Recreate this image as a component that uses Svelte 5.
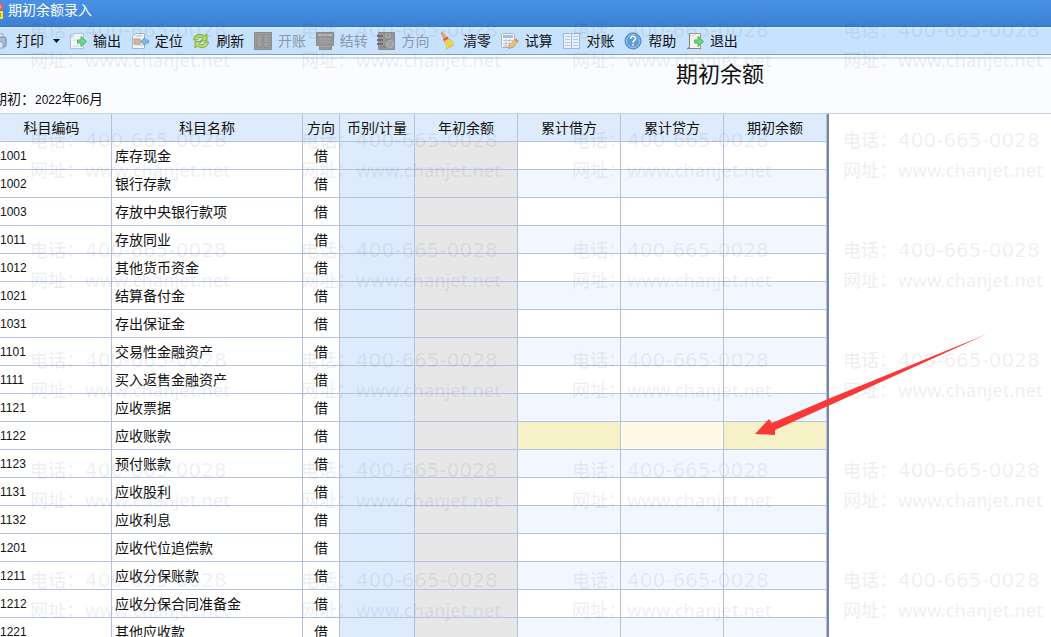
<script lang="ts">
    interface Account {
        code: string;
        name: string;
        direction: string;
    }

    const tools = [
        { icon: "export", label: "输出" },
        { icon: "locate", label: "定位" },
        { icon: "refresh", label: "刷新" },
        { icon: "open", label: "开账", disabled: true },
        { icon: "carry", label: "结转", disabled: true },
        { icon: "direction", label: "方向", disabled: true },
        { icon: "clear", label: "清零" },
        { icon: "trial", label: "试算" },
        { icon: "check", label: "对账" },
        { icon: "help", label: "帮助" },
        { icon: "exit", label: "退出" },
    ];

    const columns = ["科目编码", "科目名称", "方向", "币别/计量", "年初余额", "累计借方", "累计贷方", "期初余额"];

    const names: [string, string][] = [
        ["1001", "库存现金"],
        ["1002", "银行存款"],
        ["1003", "存放中央银行款项"],
        ["1011", "存放同业"],
        ["1012", "其他货币资金"],
        ["1021", "结算备付金"],
        ["1031", "存出保证金"],
        ["1101", "交易性金融资产"],
        ["1111", "买入返售金融资产"],
        ["1121", "应收票据"],
        ["1122", "应收账款"],
        ["1123", "预付账款"],
        ["1131", "应收股利"],
        ["1132", "应收利息"],
        ["1201", "应收代位追偿款"],
        ["1211", "应收分保账款"],
        ["1212", "应收分保合同准备金"],
        ["1221", "其他应收款"],
    ];
    const accounts: Account[] = names.map(([code, name]) => ({ code, name, direction: "借" }));

    let selected = $state("1122");

    // 4 columns x 6 rows of contact stamps
    const stamps = Array.from({ length: 24 }, (_, i) => i);
</script>

<div class="screen">
    <div class="window">
        <header class="titlebar">
            <svg class="logo" width="12" height="18" viewBox="0 0 12 18">
                <rect x="1" y="3" width="9" height="5" fill="#e9a0a8" stroke="#e0606a" stroke-width="2" />
                <rect x="1" y="11" width="9" height="6" fill="#d98a3a" stroke="#f4ea2a" stroke-width="2" />
            </svg>
            <span>期初余额录入</span>
        </header>

        <nav class="toolbar">
            <button class="tool print">
                <svg width="15" height="18" viewBox="0 0 15 18">
                    <path d="M3 6V2h8v4" fill="#eef4fa" stroke="#8ea3ba" />
                    <rect x="1" y="5" width="13" height="10" rx="2" fill="#a9bdd2" stroke="#7189a5" />
                    <rect x="3" y="10" width="8" height="6" fill="#dfe8f1" stroke="#8ea3ba" />
                </svg>
                <span>打印</span>
                <svg class="caret" width="7" height="4" viewBox="0 0 7 4"><path d="M0 0h7L3.500 4z" fill="#111" /></svg>
            </button>
            <div class="tools">
                {#each tools as tool}
                    <button class="tool" disabled={tool.disabled}>
                        <svg width="18" height="18" viewBox="0 0 18 18">
                            {#if tool.icon === "export"}
                                <path d="M4.500 1.500h10v15h-13v-12z" fill="#f1f5f9" stroke="#b3c0cd" />
                                <path d="M4.500 1.500v3.500h-3M4 8h3M4 14h6" fill="none" stroke="#c6d0da" />
                                <path d="M8.500 8H12V4.500l5.500 5-5.500 5V11H8.500z" fill="#6fd98a" stroke="#45b765" />
                            {:else if tool.icon === "locate"}
                                <path d="M4.500 1.500h9v15h-12v-12z" fill="#f4f7fa" stroke="#a5b5c6" />
                                <path d="M6 4h5M4 13h8" stroke="#b9c4d0" />
                                <rect x="3" y="7" width="6" height="5" fill="#d9b78c" stroke="#a9a08f" />
                                <path d="M17.500 8H14V5.500L9.500 9.500l4.500 4V11h3.500z" fill="#8ab3e4" stroke="#6c9bd6" />
                            {:else if tool.icon === "refresh"}
                                <path d="M1.500 8C2 3 8 .5 12.500 4L15 2v7H8.500L11 6.200C8 4.400 6 5.500 5 8z" fill="#b6d765" stroke="#84ab3a" />
                                <path d="M16.500 10c-.5 5-6.500 7.500-11 4L3 16V9.500h6.500L7 11.800c3 1.800 5 .7 6-1.800z" fill="#bddb68" stroke="#84ab3a" />
                            {:else if tool.icon === "open"}
                                <rect x=".5" y=".5" width="17" height="17" fill="#9c9c9c" stroke="#8c8c8c" />
                                <path d="M3 3h5v12H3zM10 3h5v12h-5z" fill="#aeaeae" stroke="#888" />
                                <path d="M4 5.500h3M4 8h3M4 10.500h3M4 13h3M11 5.500h3M11 8h3M11 10.500h3M11 13h3" stroke="#8a8a8a" />
                            {:else if tool.icon === "carry"}
                                <path d="M.5.500h17v13h-2v4h-12v-4h-3z" fill="#969696" stroke="#8c8c8c" />
                                <path d="M2 3h14" stroke="#b5b5b5" stroke-width="2" />
                                <path d="M4 7h10M4 10h10" stroke="#a8a8a8" />
                                <path d="M5 14.500h9" stroke="#aaa" />
                            {:else if tool.icon === "direction"}
                                <path d="M1.500.500h16v17h-16z" fill="#969696" stroke="#8a8a8a" />
                                <path d="M9 1v4h4V1" stroke="#bbb" fill="none" />
                                <path d="M0 4h6M0 8h6M0 12h6" stroke="#6e6e6e" stroke-width="2" />
                                <path d="M8 8h5M3 15h6" stroke="#7c7c7c" />
                                <circle cx="13" cy="12" r="3.500" fill="#a0a0a0" stroke="#b8b8b8" />
                            {:else if tool.icon === "clear"}
                                <path d="M2 1l2-.5 4 5.500-2.500 1.500z" fill="#f0ae72" stroke="#d8925e" />
                                <path d="M4 7l4.500-2.500L10 7l-5 3z" fill="#d9604f" />
                                <path d="M5 9.500L10 7c3 1.500 4 3.500 4.500 6.500l-7 3.500c.5-3-.5-5.500-2.500-7.500z" fill="#f1e05f" stroke="#d8bf48" />
                                <path d="M8 9.500l2.500 6M10 9l2.500 5.500" stroke="#cdb040" stroke-width=".7" />
                            {:else if tool.icon === "trial"}
                                <rect x=".5" y="1.500" width="13" height="14" rx="1" fill="#f6f7f9" stroke="#a9b4c0" />
                                <rect x="2" y="3" width="10" height="3" fill="#9dbfe6" />
                                <path d="M2 8.500h10M2 11.500h7M2 14h6M5 7v8M8.500 7v7" stroke="#bdc3ca" />
                                <path d="M7.500 16.500l1-3.500 6-6 2.500 2.500-6 6z" fill="#efc27a" stroke="#c99a56" />
                                <path d="M13.500 8l2.500 2.500 1.500-1.500L15 6.500z" fill="#d88979" />
                            {:else if tool.icon === "check"}
                                <rect x=".5" y="1.500" width="16" height="15" fill="#e9f2fc" stroke="#9db8da" />
                                <path d="M8.500 2v14" stroke="#9db8da" />
                                <path d="M2 4.500h5M2 7.500h5M2 10.500h5M2 13.500h5M10 4.500h5M10 7.500h5M10 10.500h5M10 13.500h5" stroke="#b3c9e4" />
                            {:else if tool.icon === "help"}
                                <circle cx="9" cy="9" r="8" fill="#5e9ad5" stroke="#5288c2" />
                                <circle cx="9" cy="9" r="6.500" fill="none" stroke="#a1c7ed" />
                                <path d="M6.500 7c0-4 5.500-3.500 5 0-.3 1.500-2.500 1.500-2.500 3.700M9 12v1.700" fill="none" stroke="#fff" stroke-width="1.500" />
                            {:else}
                                <path d="M3.500 1.500h11v15h-11z" fill="#f4f5ee" stroke="#a79b8d" />
                                <path d="M3.500 1.500V15L1 17M1 16.500h14" fill="none" stroke="#8e8072" />
                                <path d="M8.500 8H12V4.500l5.500 5-5.500 5V11H8.500z" fill="#6fd97a" stroke="#4ab35c" />
                            {/if}
                        </svg>
                        <span>{tool.label}</span>
                    </button>
                {/each}
            </div>
        </nav>

        <section class="heading">
            <h1>期初余额</h1>
            <p>期初：<span class="num">2022</span>年<span class="num">06</span>月</p>
        </section>

        <table>
            <colgroup>
                <col class="code" />
                <col class="name" />
                <col class="direction" />
                <col class="unit" />
                <col class="amount" />
                <col class="amount" />
                <col class="amount" />
                <col class="amount" />
            </colgroup>
            <thead>
                <tr>
                    {#each columns as column}
                        <th scope="col">{column}</th>
                    {/each}
                </tr>
            </thead>
            <tbody>
                {#each accounts as account (account.code)}
                    <tr class:selected={account.code === selected} onclick={() => (selected = account.code)}>
                        <td class="num">{account.code}</td>
                        <td>{account.name}</td>
                        <td class="center">{account.direction}</td>
                        <td class="unit"></td>
                        <td class="opening"></td>
                        <td class="entry"></td>
                        <td class="entry credit"></td>
                        <td class="entry"></td>
                    </tr>
                {/each}
            </tbody>
        </table>
    </div>

    <div class="watermark" aria-hidden="true">
        {#each stamps as stamp (stamp)}
            <div class="stamp">
                <span>电话：</span><span class="phone">400-665-0028</span>
                <span>网址：</span><span>www.chanjet.net</span>
            </div>
        {/each}
    </div>

    <svg class="pointer" width="232" height="102" viewBox="0 0 232 102" aria-hidden="true">
        <path d="M0 100L14 85L17 89L73 65L232 0L73 72L20 96L20 101z" fill="#fa3838" />
    </svg>
</div>

<style>
    :global(body) {
        margin: 0;
        background: #fff;
    }
    .screen {
        position: relative;
        height: 100vh;
        overflow: hidden;
        color: #111;
        font-family: "Liberation Sans", "Noto Sans CJK SC", sans-serif;
        font-size: 14px;
        line-height: 20px;
    }
    /* the window is scrolled slightly past its left edge */
    .window {
        margin-left: -8px;
    }
    .titlebar {
        display: flex;
        align-items: center;
        gap: 4px;
        box-sizing: border-box;
        height: 27px;
        padding: 0 0 7px;
        border-bottom: 1px solid #3476c6;
        background: linear-gradient(#4892e6, #3c80d4);
        color: #fff;
    }
    .toolbar {
        display: flex;
        align-items: center;
        box-sizing: border-box;
        height: 28px;
        padding-bottom: 2px;
        border-top: 2px solid #d6ebff;
        border-bottom: 1px solid #8b9baa;
        background: #c6e2ff;
    }
    .tools {
        display: flex;
        justify-content: space-between;
        width: 669px;
    }
    .tool {
        display: flex;
        align-items: center;
        gap: 6px;
        padding: 0;
        border: 0;
        background: none;
        color: #111;
        font: inherit;
        white-space: nowrap;
        cursor: pointer;
    }
    .tool:disabled {
        color: #8a99a8;
        cursor: default;
    }
    .print {
        gap: 9px;
        width: 77px;
    }
    .heading {
        box-sizing: border-box;
        height: 59px;
        padding: 5px 0 0;
        border-top: 1px solid #fff;
        border-bottom: 1px solid #c5d3e1;
        background: linear-gradient(#cfe4f8, #cfe4f8) 0 1px / 100% 2px no-repeat #fbfcff;
    }
    h1 {
        margin: 0;
        padding-left: 397px;
        font-size: 22px;
        font-weight: 400;
        line-height: 28px;
        text-align: center;
    }
    p {
        margin: 0;
        padding-left: 1px;
    }
    .num {
        font-size: 12px;
    }
    table {
        width: 837px;
        table-layout: fixed;
        border-collapse: separate;
        border-spacing: 0;
        border-right: 2px solid #75869a;
    }
    col.code {
        width: 120px;
    }
    col.name {
        width: 191px;
    }
    col.direction {
        width: 37px;
    }
    col.unit {
        width: 75px;
    }
    col.amount {
        width: 103px;
    }
    th,
    td {
        box-sizing: border-box;
        height: 28px;
        padding: 0;
        border-right: 1px solid #b1c3de;
        border-bottom: 1px solid #b1c3de;
        white-space: nowrap;
    }
    th {
        background: #deebfc;
        font-weight: 400;
        text-align: center;
    }
    td {
        padding-left: 3px;
    }
    td.num {
        padding-left: 8px;
    }
    td.center {
        padding: 0;
        text-align: center;
    }
    td.unit {
        background: #deebfd;
    }
    td.opening {
        background: #e7e7e7;
    }
    tr:nth-child(even) .entry {
        background: #f2f7ff;
    }
    tr.selected .entry {
        background: #f6f1c6;
    }
    tr.selected .credit {
        background: #fffae5;
    }
    .watermark {
        position: absolute;
        top: 15px;
        left: 30px;
        display: grid;
        grid-template-columns: repeat(4, 271px);
        grid-auto-rows: 110px;
        color: rgba(70, 70, 90, 0.09);
        font-family: "Noto Sans", "Noto Sans CJK SC", sans-serif;
        font-size: 18px;
        font-weight: 500;
        pointer-events: none;
    }
    .stamp {
        display: grid;
        grid-template-columns: 55px auto;
        grid-auto-rows: 30px;
        align-content: start;
        line-height: 30px;
        white-space: nowrap;
    }
    .phone {
        font-family: "DejaVu Sans", sans-serif;
        font-size: 20px;
    }
    .pointer {
        position: absolute;
        top: 334px;
        left: 755px;
    }
</style>
